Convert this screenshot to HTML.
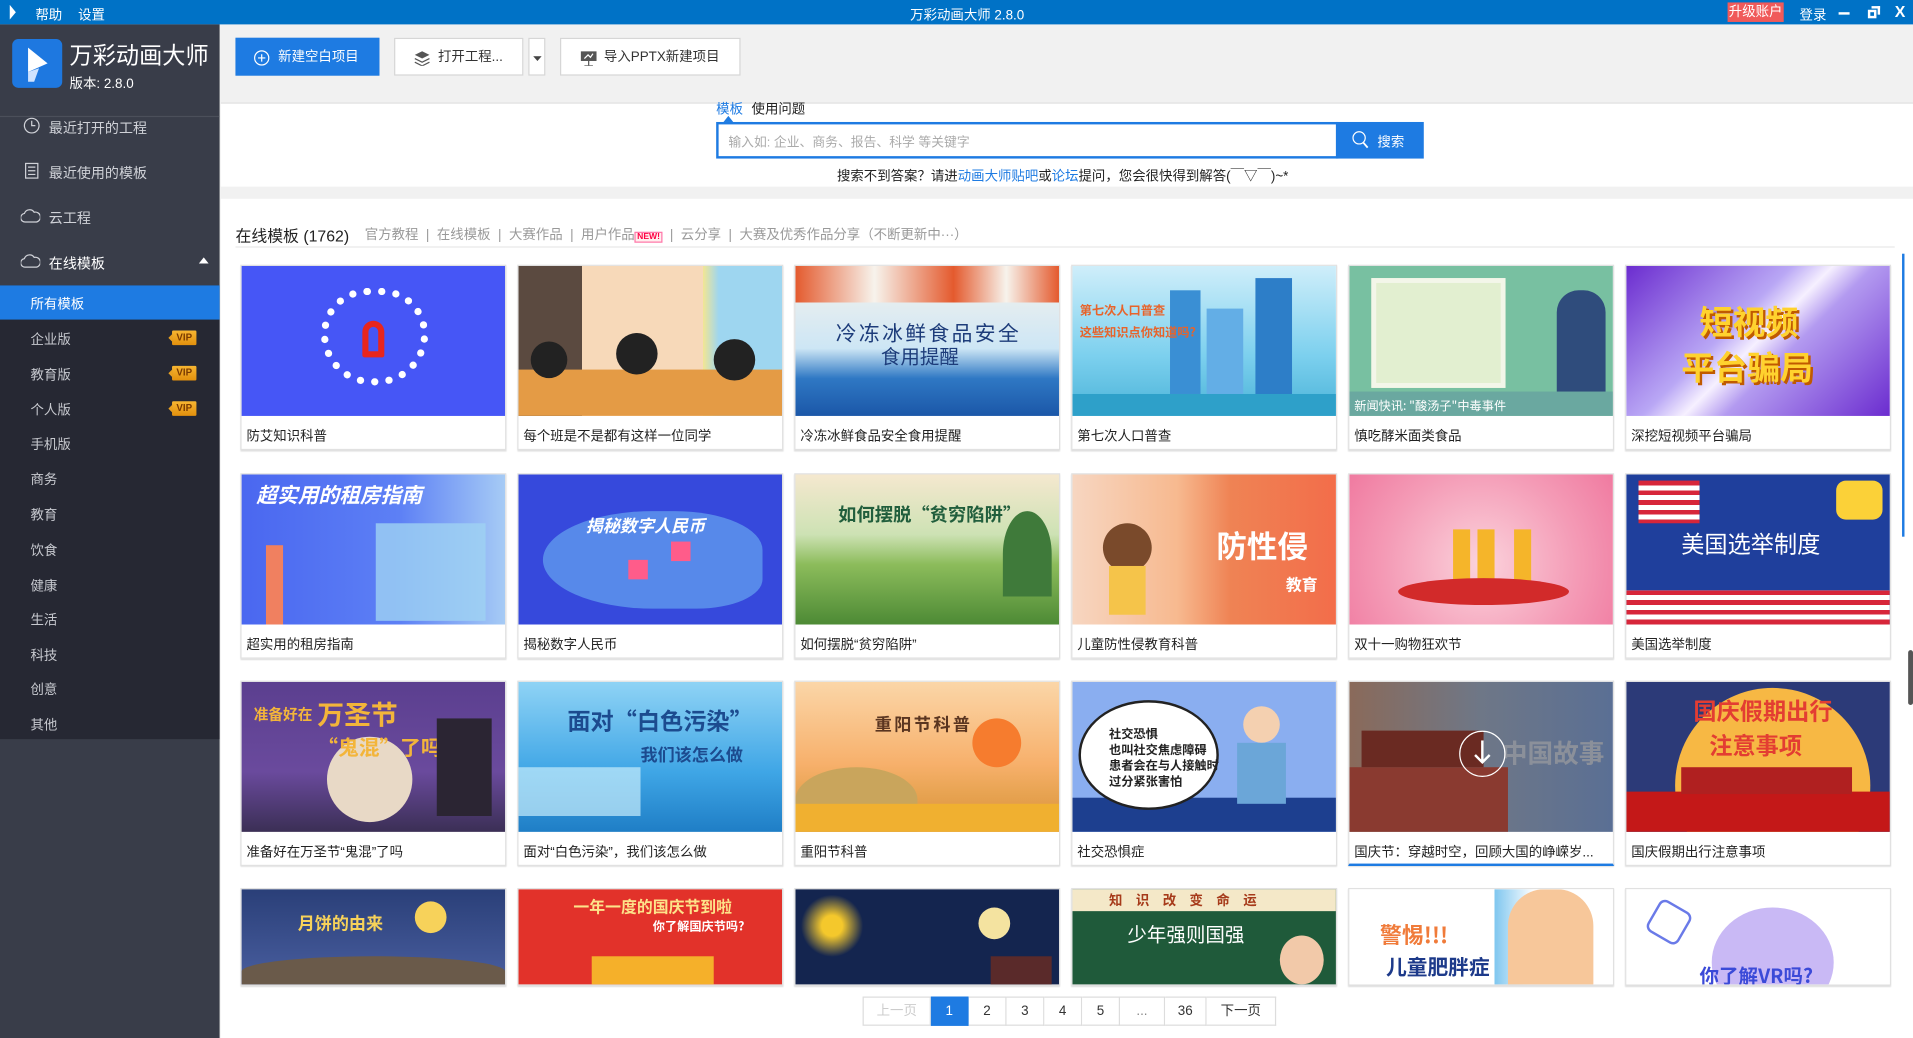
<!DOCTYPE html>
<html><head><meta charset="utf-8">
<style>
*{margin:0;padding:0;box-sizing:border-box}
html,body{width:1913px;height:1038px;overflow:hidden;background:#fff}
body{font-family:"Liberation Sans","Noto Sans CJK SC",sans-serif}
#w{position:absolute;left:0;top:0;width:1568px;height:851px;transform:scale(1.22004,1.21974);transform-origin:0 0;background:#f1f1f1;font-size:11px;color:#333}
.a{position:absolute}
.tb{left:0;top:0;width:1568px;height:20px;background:#0072c6;color:#fff}
.sb{left:0;top:20px;width:180px;height:831px;background:#393d49}
.mi{position:absolute;left:19px;color:#d0d2d8;font-size:11.5px}
.mi svg{position:absolute;left:0;top:-1px}
.mi span{position:absolute;left:21px;white-space:nowrap}
.sub{position:absolute;left:0;top:234px;width:180px;height:372px;background:#262833}
.si{position:absolute;left:25px;color:#c7c9cf;font-size:11px}
.vip{position:absolute;left:141px;width:20px;height:12px;background:linear-gradient(#f7b531,#e2900d);color:#7a3a00;font-size:8px;font-weight:bold;text-align:center;line-height:12px;border-radius:1px}
.vip:before{content:"";position:absolute;left:-3px;top:3px;border:3px solid transparent;border-right-color:#e9a020;border-left:0}
.btn{position:absolute;top:31px;height:31px;border:1px solid #d6d6d6;background:#fff;font-size:11px;line-height:31px;color:#333}
.card{position:absolute;width:218px;height:152px;background:#fff;border:1px solid #e1e1e1;box-shadow:0 1px 1px #ddd;overflow:hidden}
.card .im{position:absolute;left:0;top:0;width:216px;height:123px;overflow:hidden}
.card .cap{position:absolute;left:4px;top:131px;font-size:11px;color:#222;white-space:nowrap}
.ov{position:absolute;font-weight:bold;white-space:nowrap;font-family:"Noto Sans CJK SC",sans-serif}
.pg{position:absolute;top:817px;height:24px;border:1px solid #ddd;border-left:0;background:#fff;font-size:11px;text-align:center;line-height:22px;color:#333}
</style></head><body><div id="w">
<div class="a tb">
  <svg class="a" style="left:7px;top:4px" width="7" height="12"><path d="M1 0 L6 6 L1 12 Z" fill="#fff"/></svg>
  <span class="a" style="left:29px;top:4px;font-size:11px">帮助</span>
  <span class="a" style="left:64px;top:4px;font-size:11px">设置</span>
  <span class="a" style="left:746px;top:4px;font-size:11px">万彩动画大师 2.8.0</span>
  <span class="a" style="left:1416px;top:2px;width:46px;height:16px;background:#f05a5a;font-size:11px;line-height:16px;text-align:center;white-space:nowrap">升级账户</span>
  <span class="a" style="left:1475px;top:4px;font-size:11px;white-space:nowrap">登录</span>
  <span class="a" style="left:1507px;top:10px;width:9px;height:2px;background:#fff"></span>
  <span class="a" style="left:1531px;top:8px;width:7px;height:7px;border:2px solid #fff"></span>
  <span class="a" style="left:1534px;top:5px;width:7px;height:7px;border-top:2px solid #fff;border-right:2px solid #fff"></span>
  <span class="a" style="left:1553px;top:2px;font-size:13px;font-weight:bold">X</span>
</div>
<div class="a sb">
  <div class="a" style="left:10px;top:12px;width:41px;height:40px;background:#1e78e0;border-radius:5px"></div>
  <svg class="a" style="left:20px;top:17px" width="22" height="32"><path d="M3 2 L19 15 L3 22 Z" fill="#fff"/><path d="M3 22 L12 19 L8 30 L3 30 Z" fill="#cfe3ff"/></svg>
  <span class="a" style="left:57px;top:11px;color:#fff;font-size:19px;white-space:nowrap">万彩动画大师</span>
  <span class="a" style="left:57px;top:40px;color:#fff;font-size:11px">版本: 2.8.0</span>
  <div class="a" style="left:0;top:75px;width:180px;height:1px;background:#4b4f5a"></div>
  <div class="mi" style="top:77px"><svg width="14" height="14"><circle cx="7" cy="7" r="6" fill="none" stroke="#d0d2d8"/><path d="M7 3V7H10" fill="none" stroke="#d0d2d8"/></svg><span>最近打开的工程</span></div>
  <div class="mi" style="top:114px"><svg width="14" height="14"><rect x="2" y="1" width="10" height="12" fill="none" stroke="#d0d2d8"/><path d="M4 4H10M4 7H10M4 10H10" stroke="#d0d2d8"/></svg><span>最近使用的模板</span></div>
  <div class="mi" style="top:151px;left:17px"><svg width="16" height="14"><path d="M4 12 A3.5 3.5 0 0 1 3 5 A4.5 4.5 0 0 1 11 4 A3.5 3.5 0 0 1 13 12 Z" fill="none" stroke="#d0d2d8"/></svg><span style="left:23px">云工程</span></div>
  <div class="mi" style="top:188px;left:17px"><svg width="16" height="14"><path d="M4 12 A3.5 3.5 0 0 1 3 5 A4.5 4.5 0 0 1 11 4 A3.5 3.5 0 0 1 13 12 Z" fill="none" stroke="#d0d2d8"/></svg><span style="left:23px;color:#fff">在线模板</span></div>
  <svg class="a" style="left:163px;top:191px" width="8" height="5"><path d="M0 5 L4 0 L8 5Z" fill="#fff"/></svg>
</div>
<div class="sub">
  <div class="a" style="left:0;top:0;width:180px;height:28px;background:#1e7be2"></div>
  <span class="si" style="top:7px;color:#fff">所有模板</span>
  <span class="si" style="top:36px">企业版</span><span class="vip" style="top:37px">VIP</span>
  <span class="si" style="top:65px">教育版</span><span class="vip" style="top:66px">VIP</span>
  <span class="si" style="top:94px">个人版</span><span class="vip" style="top:95px">VIP</span>
  <span class="si" style="top:122px">手机版</span>
  <span class="si" style="top:151px">商务</span>
  <span class="si" style="top:180px">教育</span>
  <span class="si" style="top:209px">饮食</span>
  <span class="si" style="top:238px">健康</span>
  <span class="si" style="top:266px">生活</span>
  <span class="si" style="top:295px">科技</span>
  <span class="si" style="top:323px">创意</span>
  <span class="si" style="top:352px">其他</span>
</div>

<div class="btn" style="left:193px;width:118px;background:#1e7be2;border-color:#1e7be2;color:#fff"><svg class="a" style="left:14px;top:9px" width="13" height="13"><circle cx="6.5" cy="6.5" r="5.8" fill="none" stroke="#fff"/><path d="M6.5 3.5V9.5M3.5 6.5H9.5" stroke="#fff"/></svg><span class="a" style="left:34px">新建空白项目</span></div>
<div class="btn" style="left:323px;width:106px"><svg class="a" style="left:15px;top:9px" width="14" height="13"><path d="M7 1L13 4L7 7L1 4Z" fill="#555"/><path d="M1 7L7 10L13 7M1 10L7 13L13 10" fill="none" stroke="#555"/></svg><span class="a" style="left:35px">打开工程...</span></div>
<div class="btn" style="left:433px;width:14px"><svg class="a" style="left:3px;top:14px" width="7" height="4"><path d="M0 0H7L3.5 4Z" fill="#444"/></svg></div>
<div class="btn" style="left:459px;width:148px"><svg class="a" style="left:16px;top:10px" width="13" height="12"><rect x="0" y="0" width="13" height="8" fill="#555"/><path d="M6.5 8V12M3 12H10" stroke="#555"/><path d="M3 6L6 3L8 5L10 2" stroke="#fff" fill="none"/></svg><span class="a" style="left:35px">导入PPTX新建项目</span></div>

<div class="a" style="left:181px;top:84px;width:1387px;height:69px;background:#fff;border-top:1px solid #e0e0e0"></div>
<span class="a" style="left:587px;top:81px;color:#1e7be2;font-size:11px">模板</span>
<span class="a" style="left:616px;top:81px;color:#222;font-size:11px">使用问题</span>
<svg class="a" style="left:593px;top:95px" width="8" height="5"><path d="M0 5L4 0L8 5Z" fill="#1e7be2"/></svg>
<div class="a" style="left:587px;top:100px;width:510px;height:30px;border:2px solid #1e7be2;background:#fff"><span class="a" style="left:8px;top:7px;color:#aaa;font-size:10.5px">输入如: 企业、商务、报告、科学 等关键字</span></div>
<div class="a" style="left:1095px;top:100px;width:72px;height:30px;background:#1e7be2;color:#fff"><svg class="a" style="left:13px;top:7px" width="14" height="15"><circle cx="6" cy="6" r="5" fill="none" stroke="#fff"/><path d="M9.5 10L13 14" stroke="#fff" stroke-width="1.5"/></svg><span class="a" style="left:34px;top:8px;font-size:11px">搜索</span></div>
<span class="a" style="left:686px;top:136px;font-size:11px;color:#222;white-space:nowrap">搜索不到答案？请进<span style="color:#1e7be2">动画大师贴吧</span>或<span style="color:#1e7be2">论坛</span>提问，您会很快得到解答(￣▽￣)~*</span>

<div class="a" style="left:181px;top:163px;width:1387px;height:688px;background:#fff"></div>
<span class="a" style="left:193px;top:183px;font-size:13px;color:#222;white-space:nowrap">在线模板 (1762)</span>
<span class="a" style="left:299px;top:184px;font-size:11px;color:#999;white-space:nowrap">官方教程 &nbsp;|&nbsp; 在线模板 &nbsp;|&nbsp; 大赛作品 &nbsp;|&nbsp; 用户作品<span style="color:#f04;font-size:7px;font-weight:bold;border:1px solid #f7a;background:#fee;padding:0 1px">NEW!</span> &nbsp;|&nbsp; 云分享 &nbsp;|&nbsp; 大赛及优秀作品分享（不断更新中···）</span>
<div class="a" style="left:193px;top:202px;width:1360px;height:1px;background:#e8e8e8"></div>
<div class="a" style="left:1559px;top:208px;width:2px;height:232px;background:#1e7be2"></div>
<div class="a" style="left:1564px;top:533px;width:4px;height:45px;background:#555;border-radius:2px"></div>

<!-- row1 -->
<div class="card" style="left:197px;top:217px"><div class="im" style="background:#4656f6"><div class="a" style="left:65px;top:18px;width:88px;height:80px;border-radius:40px 40px 44px 44px;border:6px dotted #fff"></div><div class="a" style="left:99px;top:45px;width:18px;height:30px;border:5px solid #e8251d;border-radius:10px 10px 2px 2px"></div></div><span class="cap">防艾知识科普</span></div>
<div class="card" style="left:424px;top:217px"><div class="im" style="background:linear-gradient(90deg,#5b4a40 0,#5b4a40 24%,#f7d9b9 24%,#f7d9b9 70%,#f2e694 70%,#9ed6f0 76%)"><div class="a" style="left:0;top:85px;width:216px;height:38px;background:#e49b45"></div><div class="a" style="left:10px;top:62px;width:30px;height:30px;border-radius:50%;background:#222"></div><div class="a" style="left:80px;top:55px;width:34px;height:34px;border-radius:50%;background:#222"></div><div class="a" style="left:160px;top:60px;width:34px;height:34px;border-radius:50%;background:#222"></div></div><span class="cap">每个班是不是都有这样一位同学</span></div>
<div class="card" style="left:651px;top:217px"><div class="im" style="background:linear-gradient(#f7f3ec 0,#cde6f5 55%,#2f78c4 75%,#1b57a8)"><div class="a" style="left:0;top:0;width:216px;height:30px;background:linear-gradient(90deg,#e45a2e,#f7f3ec 30%,#e45a2e 60%,#f7f3ec 80%,#e45a2e)"></div><span class="ov" style="left:33px;top:41px;font-size:17px;color:#1d3c7a;font-weight:normal;letter-spacing:2px">冷冻冰鲜食品安全</span><span class="ov" style="left:70px;top:61px;font-size:16px;color:#1d3c7a;font-weight:normal">食用提醒</span></div><span class="cap">冷冻冰鲜食品安全食用提醒</span></div>
<div class="card" style="left:878px;top:217px"><div class="im" style="background:linear-gradient(#cfeefa,#7cd0ee 60%,#4bb3d8)"><div class="a" style="left:80px;top:20px;width:25px;height:95px;background:#3a8fd4"></div><div class="a" style="left:110px;top:35px;width:30px;height:80px;background:#63aee6"></div><div class="a" style="left:150px;top:10px;width:30px;height:105px;background:#2d7ec8"></div><div class="a" style="left:0;top:105px;width:216px;height:18px;background:#2ea0c9"></div><span class="ov" style="left:6px;top:28px;font-size:10px;color:#e8632a">第七次人口普查</span><span class="ov" style="left:6px;top:46px;font-size:10px;color:#e8632a">这些知识点你知道吗?</span></div><span class="cap">第七次人口普查</span></div>
<div class="card" style="left:1105px;top:217px"><div class="im" style="background:#78c0a1"><div class="a" style="left:18px;top:10px;width:110px;height:90px;background:#e2efd0;border:4px solid #f3f6e9"></div><div class="a" style="left:170px;top:20px;width:40px;height:90px;background:#2f4c7c;border-radius:18px 18px 0 0"></div><div class="a" style="left:0;top:103px;width:216px;height:20px;background:#6aa8a0"></div><span class="ov" style="left:4px;top:106px;font-size:10px;color:#fff;font-weight:normal">新闻快讯: "酸汤子"中毒事件</span></div><span class="cap">慎吃酵米面类食品</span></div>
<div class="card" style="left:1332px;top:217px"><div class="im" style="background:linear-gradient(135deg,#6b2ccf,#b9a7f5 40%,#f6f0ff 50%,#b39af0 60%,#6b2ccf)"><span class="ov" style="left:60px;top:25px;font-size:27px;color:#ffd22e;text-shadow:2px 2px 0 #c05a00">短视频</span><span class="ov" style="left:45px;top:62px;font-size:27px;color:#ffd22e;text-shadow:2px 2px 0 #c05a00">平台骗局</span></div><span class="cap">深挖短视频平台骗局</span></div>
<!-- row2 -->
<div class="card" style="left:197px;top:388px"><div class="im" style="background:linear-gradient(90deg,#4a67f0,#5d80f5 60%,#a6cbf5)"><span class="ov" style="left:12px;top:3px;font-size:17px;color:#fff;font-style:italic">超实用的租房指南</span><div class="a" style="left:110px;top:40px;width:90px;height:80px;background:#9fd2f3;opacity:.8"></div><div class="a" style="left:20px;top:58px;width:14px;height:65px;background:#f08060"></div></div><span class="cap">超实用的租房指南</span></div>
<div class="card" style="left:424px;top:388px"><div class="im" style="background:#3649dc"><div class="a" style="left:20px;top:30px;width:180px;height:80px;background:#6eb4f3;border-radius:50% 40% 30% 50%;opacity:.6"></div><span class="ov" style="left:55px;top:32px;font-size:14px;color:#fff;font-style:italic">揭秘数字人民币</span><div class="a" style="left:90px;top:70px;width:16px;height:16px;background:#ff5c8a"></div><div class="a" style="left:125px;top:55px;width:16px;height:16px;background:#ff5c8a"></div></div><span class="cap">揭秘数字人民币</span></div>
<div class="card" style="left:651px;top:388px"><div class="im" style="background:linear-gradient(#f5e8cf 0,#cde2b4 40%,#8cbc5b 60%,#4d8a35)"><span class="ov" style="left:35px;top:22px;font-size:15px;color:#215e3c">如何摆脱“贫穷陷阱”</span><div class="a" style="left:170px;top:30px;width:40px;height:70px;background:#3f7a3a;border-radius:50% 50% 0 0"></div></div><span class="cap">如何摆脱“贫穷陷阱”</span></div>
<div class="card" style="left:878px;top:388px"><div class="im" style="background:linear-gradient(90deg,#f7d6c1 0,#f7b98f 40%,#ef8354 60%,#f36d4a)"><span class="ov" style="left:118px;top:40px;font-size:25px;color:#fff">防性侵</span><span class="ov" style="left:175px;top:80px;font-size:13px;color:#fff">教育</span><div class="a" style="left:25px;top:40px;width:40px;height:40px;background:#7a4a2b;border-radius:50%"></div><div class="a" style="left:30px;top:75px;width:30px;height:40px;background:#f5c44a"></div></div><span class="cap">儿童防性侵教育科普</span></div>
<div class="card" style="left:1105px;top:388px"><div class="im" style="background:radial-gradient(circle at 50% 60%,#fbd3dc,#f49bb6 60%,#f07aa0)"><div class="a" style="left:85px;top:45px;width:14px;height:42px;background:#f5b52a"></div><div class="a" style="left:105px;top:45px;width:14px;height:42px;background:#f5b52a"></div><div class="a" style="left:135px;top:45px;width:14px;height:42px;background:#f5b52a"></div><div class="a" style="left:40px;top:85px;width:140px;height:22px;background:#d22a2a;border-radius:50%"></div></div><span class="cap">双十一购物狂欢节</span></div>
<div class="card" style="left:1332px;top:388px"><div class="im" style="background:#1f3f9c"><div class="a" style="left:0;top:95px;width:216px;height:28px;background:repeating-linear-gradient(#d7263a 0,#d7263a 4px,#fff 4px,#fff 8px)"></div><span class="ov" style="left:45px;top:43px;font-size:19px;color:#fff;font-weight:normal">美国选举制度</span><div class="a" style="left:10px;top:5px;width:50px;height:35px;background:repeating-linear-gradient(#d7263a 0,#d7263a 4px,#fff 4px,#fff 8px)"></div><div class="a" style="left:172px;top:5px;width:38px;height:32px;background:#fbd138;border-radius:8px"></div></div><span class="cap">美国选举制度</span></div>
<!-- row3 -->
<div class="card" style="left:197px;top:558px"><div class="im" style="background:linear-gradient(#5b3f8f,#6a4a9d 60%,#3b2f55)"><div class="a" style="left:70px;top:45px;width:70px;height:70px;border-radius:50%;background:#e8d9c6"></div><span class="ov" style="left:10px;top:18px;font-size:12px;color:#f3b53a">准备好在</span><span class="ov" style="left:62px;top:10px;font-size:22px;color:#f3b53a">万圣节</span><span class="ov" style="left:62px;top:40px;font-size:17px;color:#f3b53a">“鬼混”了吗</span><div class="a" style="left:160px;top:30px;width:45px;height:80px;background:#2b2533"></div></div><span class="cap">准备好在万圣节“鬼混”了吗</span></div>
<div class="card" style="left:424px;top:558px"><div class="im" style="background:linear-gradient(#8fd3f5,#3fa6e6 60%,#1f7ec6)"><span class="ov" style="left:40px;top:18px;font-size:19px;color:#1c4b8f">面对“白色污染”</span><span class="ov" style="left:100px;top:50px;font-size:14px;color:#1c4b8f">我们该怎么做</span><div class="a" style="left:0;top:70px;width:100px;height:40px;background:#c8ecfb;opacity:.7"></div></div><span class="cap">面对“白色污染”，我们该怎么做</span></div>
<div class="card" style="left:651px;top:558px"><div class="im" style="background:linear-gradient(#fbd6a8,#f7b06b 55%,#e7a351 75%,#d98e3a)"><div class="a" style="left:145px;top:30px;width:40px;height:40px;border-radius:50%;background:#f67c2e"></div><span class="ov" style="left:65px;top:25px;font-size:14px;color:#5a3520;letter-spacing:2px">重阳节科普</span><div class="a" style="left:0;top:70px;width:100px;height:53px;background:#c9a55c;border-radius:50% 50% 0 0"></div><div class="a" style="left:0;top:100px;width:216px;height:23px;background:#f0b030"></div></div><span class="cap">重阳节科普</span></div>
<div class="card" style="left:878px;top:558px"><div class="im" style="background:#8aaef0"><div class="a" style="left:0;top:95px;width:216px;height:28px;background:#1d3f8f"></div><div class="a" style="left:5px;top:15px;width:115px;height:90px;border-radius:50%;background:#fff;border:2px solid #222"></div><span class="ov" style="left:30px;top:35px;font-size:10px;color:#222;line-height:13px">社交恐惧<br>也叫社交焦虑障碍<br>患者会在与人接触时<br>过分紧张害怕</span><div class="a" style="left:140px;top:20px;width:30px;height:30px;border-radius:50%;background:#f4d0b0"></div><div class="a" style="left:135px;top:50px;width:40px;height:50px;background:#6ba6d8"></div></div><span class="cap">社交恐惧症</span></div>
<div class="card" style="left:1105px;top:558px;border-bottom:2px solid #1e7be2"><div class="im" style="background:linear-gradient(90deg,#8a6a5a,#6e7787 50%,#5a6f94)"><div class="a" style="left:0;top:70px;width:130px;height:53px;background:#8a3a30"></div><div class="a" style="left:10px;top:40px;width:100px;height:30px;background:#6a2a22"></div><span class="ov" style="left:125px;top:43px;font-size:21px;color:#8b909a">中国故事</span><div class="a" style="left:90px;top:40px;width:38px;height:38px;border:1.5px solid #fff;border-radius:50%"></div><svg class="a" style="left:101px;top:48px" width="16" height="22"><path d="M8 0V18M2 12L8 18L14 12" stroke="#fff" stroke-width="2" fill="none"/></svg></div><span class="cap">国庆节：穿越时空，回顾大国的峥嵘岁...</span></div>
<div class="card" style="left:1332px;top:558px"><div class="im" style="background:#2c3a78"><div class="a" style="left:40px;top:5px;width:160px;height:160px;border-radius:50%;background:#f7b844"></div><span class="ov" style="left:55px;top:10px;font-size:19px;color:#e33d32">国庆假期出行</span><span class="ov" style="left:68px;top:38px;font-size:19px;color:#e33d32">注意事项</span><div class="a" style="left:0;top:90px;width:216px;height:33px;background:#c41818"></div><div class="a" style="left:45px;top:70px;width:140px;height:22px;background:#b02020"></div></div><span class="cap">国庆假期出行注意事项</span></div>
<!-- row4 -->
<div class="card" style="left:197px;top:728px;height:80px"><div class="im" style="height:80px;background:linear-gradient(#2a3f78,#4a5fa0)"><div class="a" style="left:142px;top:10px;width:26px;height:26px;border-radius:50%;background:#f7d25a"></div><span class="ov" style="left:46px;top:18px;font-size:14px;color:#f7d25a">月饼的由来</span><div class="a" style="left:0;top:55px;width:216px;height:25px;background:#6a5a4a;border-radius:50% 50% 0 0"></div></div></div>
<div class="card" style="left:424px;top:728px;height:80px"><div class="im" style="height:80px;background:#e2322a"><span class="ov" style="left:45px;top:4px;font-size:13px;color:#fde38a">一年一度的国庆节到啦</span><span class="ov" style="left:110px;top:22px;font-size:10px;color:#fff">你了解国庆节吗?</span><div class="a" style="left:60px;top:55px;width:100px;height:25px;background:#f5b02a"></div></div></div>
<div class="card" style="left:651px;top:728px;height:80px"><div class="im" style="height:80px;background:#14254f"><div class="a" style="left:150px;top:15px;width:26px;height:26px;border-radius:50%;background:#f4e3a0"></div><div class="a" style="left:0;top:0;width:60px;height:60px;background:radial-gradient(#f4c82c 20%,transparent 60%)"></div><div class="a" style="left:160px;top:55px;width:50px;height:25px;background:#5a2a2a"></div></div></div>
<div class="card" style="left:878px;top:728px;height:80px"><div class="im" style="height:80px;background:#1f5a3a"><div class="a" style="left:0;top:0;width:216px;height:18px;background:#f4e8c8"></div><span class="ov" style="left:30px;top:1px;font-size:11px;color:#a63a1a;letter-spacing:11px">知识改变命运</span><span class="ov" style="left:45px;top:24px;font-size:16px;color:#fff;font-weight:normal">少年强则国强</span><div class="a" style="left:170px;top:38px;width:36px;height:40px;border-radius:50%;background:#f2c9a9"></div></div></div>
<div class="card" style="left:1105px;top:728px;height:80px"><div class="im" style="height:80px;background:linear-gradient(90deg,#fff 0,#fff 55%,#7ec6ef 55%,#fff 70%)"><span class="ov" style="left:25px;top:24px;font-size:18px;color:#f07b3a">警惕!!!</span><span class="ov" style="left:30px;top:50px;font-size:17px;color:#1d3a8a">儿童肥胖症</span><div class="a" style="left:130px;top:0;width:70px;height:80px;background:#f7c79a;border-radius:30px 30px 0 0"></div></div></div>
<div class="card" style="left:1332px;top:728px;height:80px"><div class="im" style="height:80px;background:#fff"><div class="a" style="left:70px;top:15px;width:100px;height:90px;border-radius:50%;background:#c9b9f5"></div><span class="ov" style="left:60px;top:58px;font-size:16px;color:#3b4ad8">你了解VR吗?</span><div class="a" style="left:20px;top:12px;width:30px;height:30px;border:2px solid #6a7ae8;border-radius:6px;transform:rotate(30deg)"></div></div></div>

<div class="pg" style="left:707px;width:56px;border-left:1px solid #ddd;color:#ccc">上一页</div>
<div class="pg" style="left:763px;width:31px;background:#1e7be2;border-color:#1e7be2;color:#fff">1</div>
<div class="pg" style="left:794px;width:31px">2</div>
<div class="pg" style="left:825px;width:31px">3</div>
<div class="pg" style="left:856px;width:31px">4</div>
<div class="pg" style="left:887px;width:31px">5</div>
<div class="pg" style="left:918px;width:37px;color:#888">...</div>
<div class="pg" style="left:955px;width:34px">36</div>
<div class="pg" style="left:989px;width:57px">下一页</div>
</div></body></html>
